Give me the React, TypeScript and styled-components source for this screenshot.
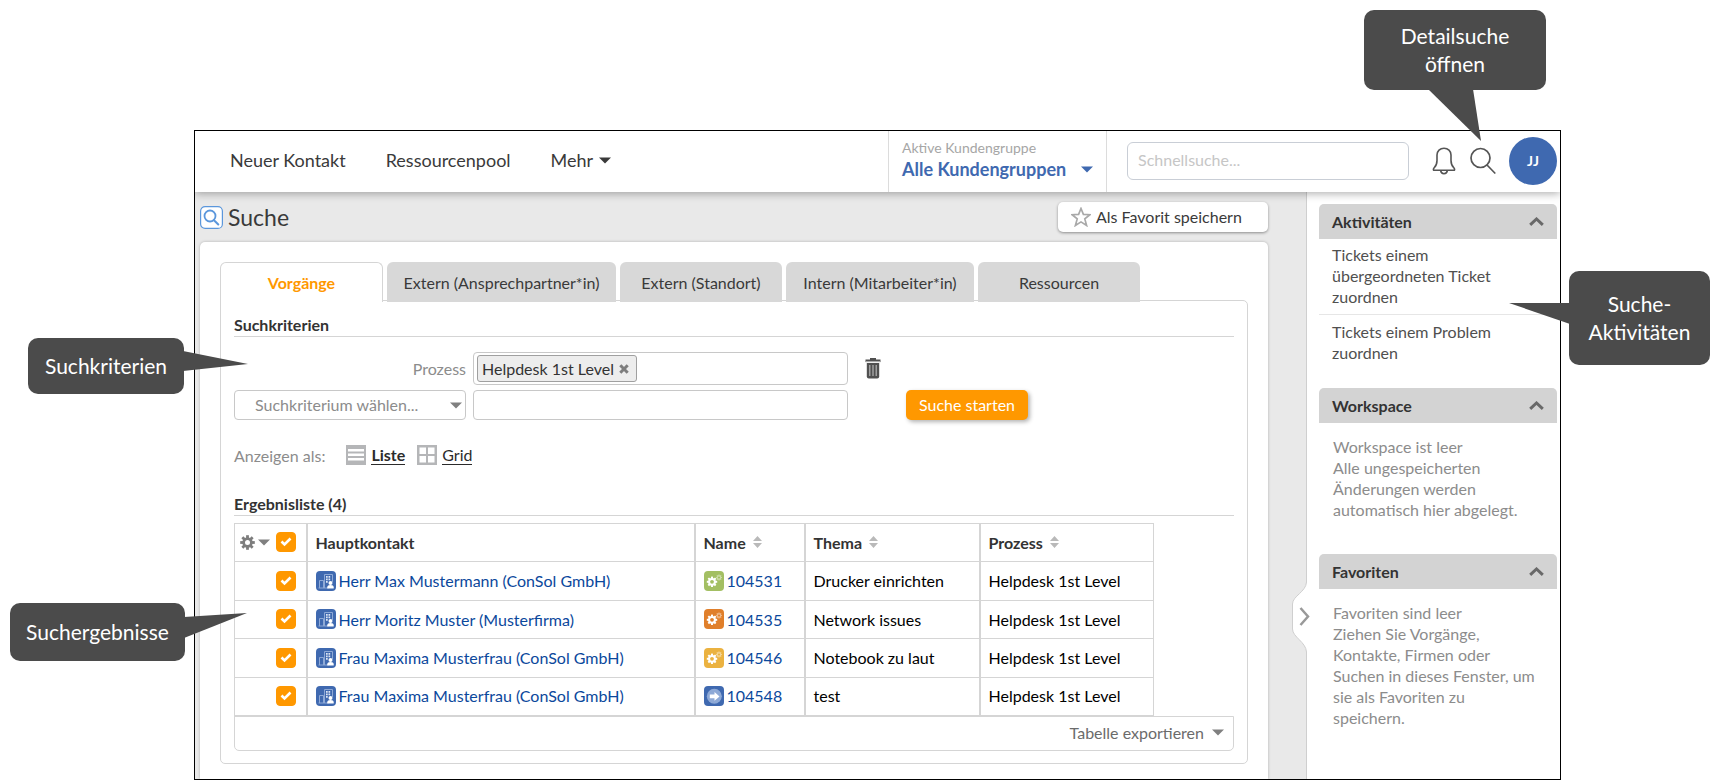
import React, { useState } from 'react';
import styled, { createGlobalStyle, css } from 'styled-components';

const GlobalStyle = createGlobalStyle`
  *, *::before, *::after { box-sizing: border-box; }
  body {
    margin: 0;
    background: #fff;
    color: #3a3a3a;
    font-family: Lato, 'Open Sans', 'Liberation Sans', sans-serif;
    font-size: 16px;
    line-height: 21px;
  }
  button, input, select { font: inherit; color: inherit; }
  button { padding: 0; border: 0; background: none; cursor: pointer; text-align: left; }
  a { color: inherit; text-decoration: none; }
  h1, h2, p, ul { margin: 0; padding: 0; font-size: inherit; font-weight: inherit; }
  ul { list-style: none; }
  svg { display: block; flex: none; }
`;

const Stage = styled.div`
  position: relative;
  padding: 130px 159px 0 194px;
`;

const AppWindow = styled.div`
  overflow: hidden;
  border: 1px solid #000;
  background: #e9e9e9;
`;

/* ---------- header ---------- */

const Header = styled.header`
  position: relative;
  z-index: 1;
  display: flex;
  height: 61px;
  background: #fff;
  box-shadow: 0 2px 8px rgba(0, 0, 0, 0.3);
`;

const Nav = styled.nav`
  flex: 1;
  display: flex;
  align-items: center;
  gap: 40px;
  padding: 0 0 2px 35px;
  font-size: 18px;
  white-space: nowrap;
`;

const MoreButton = styled.button`
  display: flex;
  align-items: center;
  gap: 6px;
`;

const GroupPicker = styled.button`
  display: flex;
  flex-direction: column;
  justify-content: center;
  width: 219px;
  padding: 0 13px 5px;
  border-left: 1px solid #dcdcdc;
  border-right: 1px solid #dcdcdc;
`;

const GroupLabel = styled.span`
  color: #a6a6a6;
  font-size: 14px;
  line-height: 20px;
`;

const GroupValue = styled.span`
  display: flex;
  align-items: center;
  justify-content: space-between;
  width: 100%;
  color: #3f69b0;
  font-size: 18px;
  font-weight: 700;
  line-height: 22px;
  white-space: nowrap;
`;

const HeaderTools = styled.div`
  display: flex;
  align-items: center;
  gap: 13px;
  padding: 0 3px 2px 20px;
`;

const QuickSearch = styled.input`
  width: 282px;
  height: 38px;
  margin-right: 9px;
  padding: 0 10px 2px;
  border: 1px solid #c9ced6;
  border-radius: 6px;
  background: #fff;
  &::placeholder { color: #c6c6c6; opacity: 1; }
`;

const IconButton = styled.button`
  display: grid;
  place-items: center;
  width: 26px;
  height: 32px;
`;

const Avatar = styled.button`
  width: 48px;
  height: 48px;
  border-radius: 50%;
  background: #3f69b0;
  color: #fff;
  font-size: 14px;
  font-weight: 700;
  text-align: center;
`;

/* ---------- page body ---------- */

const Body = styled.div`
  display: flex;
`;

const Main = styled.main`
  flex: 1;
  min-width: 0;
  padding: 10px 38px 0 5px;
`;

const TitleBar = styled.div`
  display: flex;
  align-items: center;
  gap: 5px;
  height: 30px;
  margin-bottom: 10px;
`;

const Title = styled.h1`
  flex: 1;
  font-size: 23px;
  line-height: 30px;
`;

const FavoriteButton = styled.button`
  display: flex;
  align-items: center;
  gap: 5px;
  width: 210px;
  height: 30px;
  padding: 0 0 1px 13px;
  border-radius: 5px;
  background: #fff;
  box-shadow: 0 1px 3px rgba(0, 0, 0, 0.4);
`;

const Card = styled.section`
  padding: 20px 20px 15px;
  border-radius: 5px 5px 0 0;
  background: #fff;
  box-shadow: 0 0 3px rgba(0, 0, 0, 0.25);
`;

const TabList = styled.div`
  position: relative;
  display: flex;
  gap: 4px;
  height: 39px;
  margin-bottom: -1px;
`;

const Tab = styled.button<{ $active: boolean; $basis: number }>`
  width: ${(p) => p.$basis}px;
  height: 40px;
  border-radius: 6px 6px 0 0;
  background: #d8d8d8;
  text-align: center;
  white-space: nowrap;
  ${(p) =>
    p.$active &&
    css`
      border: 1px solid #d5d5d5;
      border-bottom: 0;
      background: #fff;
      color: #ff9800;
      font-weight: 700;
    `}
`;

const Panel = styled.div`
  padding: 12px 13px;
  border: 1px solid #d5d5d5;
  border-radius: 0 5px 5px 5px;
`;

const SectionTitle = styled.h2`
  height: 24px;
  border-bottom: 1px solid #d5d5d5;
  color: #333;
  font-size: 16px;
  font-weight: 700;
  line-height: 23px;
`;

const Criteria = styled.form`
  display: grid;
  grid-template-columns: 232px minmax(0, 375px) 44px auto;
  gap: 5px 7px;
  justify-content: start;
  align-items: center;
  margin: 15px 0 25px;
`;

const CriterionLabel = styled.label`
  justify-self: end;
  color: #8c8c8c;
`;

const TokenBox = styled.div`
  display: flex;
  align-items: center;
  gap: 4px;
  height: 33px;
  padding: 0 3px;
  border: 1px solid #c8c8c8;
  border-radius: 4px;
`;

const Token = styled.span`
  display: flex;
  align-items: center;
  gap: 5px;
  height: 27px;
  padding: 0 7px 0 4px;
  border: 1px solid #a0a0a0;
  border-radius: 3px;
  background: #ededed;
  color: #333;
  white-space: nowrap;
`;

const TokenInput = styled.input`
  flex: 1;
  min-width: 0;
  border: 0;
  outline: 0;
  background: none;
`;

const TextField = styled.input`
  width: 100%;
  height: 30px;
  padding: 0 8px;
  border: 1px solid #c8c8c8;
  border-radius: 4px;
`;

const SelectBox = styled.div`
  display: grid;
  align-items: center;
  > * { grid-area: 1 / 1; }
  > svg { justify-self: end; margin-right: 4px; pointer-events: none; }
`;

const Select = styled.select`
  appearance: none;
  width: 100%;
  height: 30px;
  padding: 0 20px 1px;
  border: 1px solid #c8c8c8;
  border-radius: 4px;
  background: #fff;
  color: #8c8c8c;
`;

const DeleteButton = styled.button`
  padding-left: 10px;
`;

const PrimaryButton = styled.button`
  width: 122px;
  height: 30px;
  padding-bottom: 1px;
  border-radius: 5px;
  background: #ff9800;
  box-shadow: 2px 2px 4px rgba(0, 0, 0, 0.3);
  color: #fff;
  text-align: center;
`;

const ViewSwitch = styled.div`
  display: flex;
  align-items: center;
  gap: 12px;
  height: 20px;
  margin-bottom: 27px;
  color: #8c8c8c;
  > span { margin-right: 9px; }
`;

const ViewLink = styled.a<{ $active?: boolean }>`
  display: flex;
  align-items: center;
  gap: 5px;
  color: #2b2b2b;
  font-weight: ${(p) => (p.$active ? 700 : 400)};
  > span { border-bottom: 1px solid #2b2b2b; line-height: 18px; }
`;

/* ---------- result table ---------- */

const ResultTable = styled.table`
  width: 919px;
  margin-top: 7px;
  border-collapse: collapse;
  table-layout: fixed;
  color: #000;
  white-space: nowrap;
  tr { height: 38px; }
  tbody tr:nth-child(odd) { height: 39px; }
  th, td {
    padding: 0 8px 1px;
    border: 1px solid #d5d5d5;
    border-width: 1px 2px;
    text-align: left;
    vertical-align: middle;
  }
  th { color: #333; }
  th:first-child, td:first-child { padding: 0 10px 1px 6px; border-left-width: 1px; }
  th:last-child, td:last-child { border-right-width: 1px; }
  tbody tr:last-child td { border-bottom-width: 2px; }
`;

const SelectCell = styled.div`
  display: flex;
  align-items: center;
  justify-content: flex-end;
  gap: 6px;
`;

const GearMenu = styled.button`
  display: flex;
  align-items: center;
  gap: 3px;
`;

const CheckBox = styled.label`
  display: grid;
  place-items: center;
  > * { grid-area: 1 / 1; }
  > svg { pointer-events: none; }
`;

const CheckInput = styled.input`
  appearance: none;
  width: 20px;
  height: 20px;
  margin: 0;
  border: 1px solid #ff9800;
  border-radius: 4px;
  background: #fff;
  &:checked { background: #ff9800; }
`;

const SortHead = styled.button`
  display: flex;
  align-items: center;
  gap: 7px;
  font-weight: 700;
`;

const EntityLink = styled.a`
  display: flex;
  align-items: center;
  gap: 3px;
  color: #0b489c;
`;

const TableFooter = styled.div`
  display: flex;
  justify-content: flex-end;
  align-items: center;
  height: 35px;
  margin-top: -1px;
  padding: 0 9px 1px 0;
  border: 1px solid #d5d5d5;
  border-radius: 0 0 5px 5px;
`;

const ExportButton = styled.button`
  display: flex;
  align-items: center;
  gap: 8px;
  color: #6b6b6b;
`;

/* ---------- sidebar ---------- */

const Sidebar = styled.aside`
  position: relative;
  width: 254px;
  padding: 12px 3px 0 12px;
  border-left: 1px solid #cfcfcf;
  background: #fff;
`;

const CollapseHandle = styled.button`
  position: absolute;
  top: 390px;
  left: -16px;
`;

const SideSection = styled.section<{ $gap: number }>`
  padding-bottom: ${(p) => p.$gap}px;
`;

const SideHeader = styled.button`
  display: flex;
  align-items: center;
  justify-content: space-between;
  width: 100%;
  height: 35px;
  padding: 0 13px 1px;
  border-radius: 5px 5px 0 0;
  background: #d3d3d3;
  color: #333;
  font-size: 16px;
  font-weight: 700;
`;

const ActivityList = styled.ul`
  li { padding: 5px 13px 7px; color: #50504f; }
  li + li { padding: 6px 13px; border-top: 1px solid #e6e6e6; }
  li a { display: block; max-width: 180px; }
`;

const EmptyText = styled.p`
  padding: 13px 14px 0;
  color: #8c8c8c;
`;

/* ---------- callouts ---------- */

const Callout = styled.div<{ $w: number; $h: number }>`
  position: absolute;
  z-index: 2;
  display: grid;
  place-items: center;
  width: ${(p) => p.$w}px;
  height: ${(p) => p.$h}px;
  padding-bottom: 1px;
  border-radius: 10px;
  background: #4b4b4b;
  color: #fff;
  font-size: 21px;
  line-height: 28px;
  text-align: center;
  svg { position: absolute; fill: #4b4b4b; pointer-events: none; }
`;

const DetailCallout = styled(Callout)`
  top: 10px;
  right: 174px;
  svg { top: 79px; left: 64px; }
`;

const ActivityCallout = styled(Callout)`
  top: 271px;
  right: 10px;
  svg { top: 32px; left: -60px; }
`;

const CriteriaCallout = styled(Callout)`
  top: 338px;
  left: 28px;
  svg { top: 13px; left: 155px; }
`;

const ResultCallout = styled(Callout)`
  top: 603px;
  left: 10px;
  svg { top: 9px; left: 174px; }
`;

/* ---------- icons ---------- */

const Caret = ({ color = '#808080' }: { color?: string }) => (
  <svg width="12" height="7" viewBox="0 0 12 7" aria-hidden="true">
    <path d="M0 0.5h12l-6 6z" fill={color} />
  </svg>
);

const BellIcon = () => (
  <svg width="24" height="28" viewBox="0 0 24 28" fill="none" stroke="#555" strokeWidth="1.6" strokeLinejoin="round" aria-hidden="true">
    <path d="M12 1.2C8 1.2 5 4 5 8v5.500C5 17.500 4 19 2.200 20.800c-.8.8-1 2-.6 2.400h20.800c.4-.4.2-1.600-.6-2.400C20 19 19 17.500 19 13.500V8c0-4-3-6.800-7-6.800z" />
    <path d="M8.600 23.400c.3 2.200 1.600 3.400 3.400 3.400s3.100-1.200 3.400-3.400" />
  </svg>
);

const SearchIcon = () => (
  <svg width="26" height="28" viewBox="0 0 26 28" fill="none" stroke="#555" strokeWidth="1.700" strokeLinecap="round" aria-hidden="true">
    <circle cx="10.500" cy="11" r="9.500" />
    <path d="M17.500 18.500l7.300 7.500" />
  </svg>
);

const PageIcon = () => (
  <svg width="23" height="23" viewBox="0 0 23 23" fill="none" stroke="#5b97dc" aria-hidden="true">
    <rect x="0.600" y="0.600" width="21.800" height="21.800" rx="4.500" fill="#fff" strokeWidth="1.200" />
    <circle cx="10" cy="10" r="5.500" strokeWidth="1.800" />
    <path d="M14 14.200l4.300 4.300" strokeWidth="2" strokeLinecap="round" />
  </svg>
);

const StarIcon = () => (
  <svg width="20" height="20" viewBox="0 0 20 20" fill="none" stroke="#a9a9a9" strokeWidth="1.700" aria-hidden="true">
    <path d="M10 1.500l2.400 5.900 6.500.3-5.100 4.200 1.800 6.600L10 14.900l-5.600 3.600 1.800-6.600L1.100 7.700l6.500-.3z" />
  </svg>
);

const TrashIcon = () => (
  <svg width="16" height="21" viewBox="0 0 16 21" aria-hidden="true">
    <path d="M5 0h6v1.500h4.500V4H.5V1.500H5z" fill="#505050" />
    <path d="M.5 3h15v1.200H.5z" fill="#a8a8a8" />
    <path d="M1.800 5h12.400v13.500a2 2 0 0 1-2 2H3.800a2 2 0 0 1-2-2z" fill="#505050" />
    <path d="M4.800 7v11M8 7v11M11.200 7v11" stroke="#b5b5b5" strokeWidth="1.200" />
  </svg>
);

const CloseIcon = () => (
  <svg width="10" height="10" viewBox="0 0 10 10" stroke="#7d7d7d" strokeWidth="3" aria-hidden="true">
    <path d="M1.300 1.300l7.400 7.400M8.700 1.300L1.300 8.700" />
  </svg>
);

const ListIcon = () => (
  <svg width="20" height="20" viewBox="0 0 20 20" aria-hidden="true">
    <rect width="20" height="20" fill="#b5b6b8" />
    <path d="M2 4h16v2.500H2zM2 8.500h16V11H2zM2 13h16v2.500H2z" fill="#fff" />
  </svg>
);

const GridIcon = () => (
  <svg width="20" height="20" viewBox="0 0 20 20" aria-hidden="true">
    <rect width="20" height="20" fill="#b5b6b8" />
    <path d="M2.500 2.500H9V9H2.500zM11 2.500h6.500V9H11zM2.500 11H9v6.500H2.500zM11 11h6.500v6.500H11z" fill="#fff" />
  </svg>
);

const teeth = (cx: number, cy: number, r: number, w: number) =>
  [0, 45, 90, 135].map((a) => (
    <rect key={a} x={cx - r} y={cy - w / 2} width={2 * r} height={w} transform={`rotate(${a} ${cx} ${cy})`} />
  ));

const GearIcon = () => (
  <svg width="15" height="15" viewBox="0 0 15 15" fill="#7d7d7d" aria-hidden="true">
    {teeth(7.5, 7.5, 7.3, 2.8)}
    <circle cx="7.500" cy="7.500" r="5.200" />
    <circle cx="7.500" cy="7.500" r="2.500" fill="#fff" />
  </svg>
);

const CheckMark = () => (
  <svg width="12" height="10" viewBox="0 0 12 10" fill="none" stroke="#fff" strokeWidth="2.600" aria-hidden="true">
    <path d="M1.500 4.500l3 3L10.500 1.500" />
  </svg>
);

const SortIcon = () => (
  <svg width="9" height="12" viewBox="0 0 9 12" fill="#b9b9b9" aria-hidden="true">
    <path d="M4.500 0L9 5H0zM0 7h9l-4.500 5z" />
  </svg>
);

const ContactIcon = () => (
  <svg width="20" height="20" viewBox="0 0 20 20" fill="none" aria-hidden="true">
    <rect width="20" height="20" rx="4" fill="#3f69b0" />
    <path d="M3.500 17V9.500h4V17M8.500 17V3.500h8V11" stroke="#8ea9d6" strokeWidth="1" />
    <path d="M2.500 17h10" stroke="#8ea9d6" />
    <path d="M10 5h1.700v1.700H10zM12.500 5h1.700v1.700h-1.700zM10 7.500h1.700v1.700H10zM12.500 7.500h1.700v1.700h-1.700zM10 10h1.700v1.700H10z" fill="#dfe7f5" />
    <circle cx="14.500" cy="12" r="2" fill="#fff" />
    <path d="M11.300 17.500v-1.300c0-1.400 1.200-2.200 3.200-2.200s3.200.8 3.200 2.200v1.300z" fill="#fff" />
  </svg>
);

const GearsTile = ({ color }: { color: string }) => (
  <svg width="20" height="20" viewBox="0 0 20 20" aria-hidden="true">
    <rect width="20" height="20" rx="4" fill={color} />
    <g fill="#fff">
      {teeth(8, 10.8, 5.2, 2)}
      <circle cx="8" cy="10.800" r="3.900" />
      <circle cx="8" cy="10.800" r="1.900" fill={color} />
    </g>
    <g fill="#fff" opacity="0.45">
      {teeth(15, 6.5, 3, 1.2)}
      <circle cx="15" cy="6.500" r="2.200" />
    </g>
    <circle cx="15" cy="6.500" r="1.100" fill={color} />
  </svg>
);

const ArrowTile = () => (
  <svg width="20" height="20" viewBox="0 0 20 20" aria-hidden="true">
    <rect width="20" height="20" rx="4" fill="#3f69b0" />
    <circle cx="10.300" cy="10.300" r="7.500" fill="#8ea9d6" />
    <path d="M5.800 8.500h4.700V6l5 4.400-5 4.400v-2.500H5.800z" fill="#fff" />
  </svg>
);

const ChevronUp = () => (
  <svg width="15" height="9" viewBox="0 0 15 9" fill="none" stroke="#696969" strokeWidth="3" aria-hidden="true">
    <path d="M1.200 7.800L7.500 2l6.300 5.800" />
  </svg>
);

const HandleIcon = () => (
  <svg width="20" height="70" viewBox="0 0 20 70" fill="none" aria-hidden="true">
    <path d="M20 0h-4.500C15 10 1.500 14 1.500 22v25C1.500 55 15 60 15.500 70H20z" fill="#fff" />
    <path d="M15.500 0C15 10 1.500 14 1.500 22v25C1.500 55 15 60 15.500 70" stroke="#cfcfcf" />
    <path d="M9.500 26l7.500 8.500L9.500 43" stroke="#999" strokeWidth="2.500" />
  </svg>
);

/* ---------- data ---------- */

const tabs = [
  { label: 'Vorgänge', basis: 163 },
  { label: 'Extern (Ansprechpartner*in)', basis: 229 },
  { label: 'Extern (Standort)', basis: 162 },
  { label: 'Intern (Mitarbeiter*in)', basis: 188 },
  { label: 'Ressourcen', basis: 162 },
];

const tickets = [
  { contact: 'Herr Max Mustermann (ConSol GmbH)', id: '104531', topic: 'Drucker einrichten', color: '#a3bf63' },
  { contact: 'Herr Moritz Muster (Musterfirma)', id: '104535', topic: 'Network issues', color: '#e07f2b' },
  { contact: 'Frau Maxima Musterfrau (ConSol GmbH)', id: '104546', topic: 'Notebook zu laut', color: '#ebb240' },
  { contact: 'Frau Maxima Musterfrau (ConSol GmbH)', id: '104548', topic: 'test', color: null },
];

const columnWidths = [72, 388, 110, 175, 174];

const Check = ({ label }: { label: string }) => (
  <CheckBox>
    <CheckInput type="checkbox" defaultChecked aria-label={label} />
    <CheckMark />
  </CheckBox>
);

export default function App() {
  const [active, setActive] = useState(0);

  return (
    <>
      <GlobalStyle />
      <Stage>
        <AppWindow>
          <Header>
            <Nav>
              <a href="#kontakt">Neuer Kontakt</a>
              <a href="#ressourcen">Ressourcenpool</a>
              <MoreButton type="button">Mehr <Caret color="#3a3a3a" /></MoreButton>
            </Nav>
            <GroupPicker type="button">
              <GroupLabel>Aktive Kundengruppe</GroupLabel>
              <GroupValue>Alle Kundengruppen <Caret color="#3f69b0" /></GroupValue>
            </GroupPicker>
            <HeaderTools>
              <QuickSearch type="text" aria-label="Schnellsuche" placeholder="Schnellsuche..." />
              <IconButton type="button" aria-label="Benachrichtigungen"><BellIcon /></IconButton>
              <IconButton type="button" aria-label="Detailsuche"><SearchIcon /></IconButton>
              <Avatar type="button">JJ</Avatar>
            </HeaderTools>
          </Header>

          <Body>
            <Main>
              <TitleBar>
                <PageIcon />
                <Title>Suche</Title>
                <FavoriteButton type="button"><StarIcon />Als Favorit speichern</FavoriteButton>
              </TitleBar>
              <Card>
                <TabList role="tablist">
                  {tabs.map((t, i) => (
                    <Tab key={t.label} type="button" role="tab" aria-selected={i === active} $active={i === active} $basis={t.basis} onClick={() => setActive(i)}>
                      {t.label}
                    </Tab>
                  ))}
                </TabList>
                <Panel>
                  <SectionTitle>Suchkriterien</SectionTitle>
                  <Criteria onSubmit={(e) => e.preventDefault()}>
                    <CriterionLabel htmlFor="process">Prozess</CriterionLabel>
                    <TokenBox>
                      <Token>
                        Helpdesk 1st Level
                        <button type="button" aria-label="Entfernen"><CloseIcon /></button>
                      </Token>
                      <TokenInput id="process" type="text" />
                    </TokenBox>
                    <DeleteButton type="button" aria-label="Kriterium löschen"><TrashIcon /></DeleteButton>
                    <span />
                    <SelectBox>
                      <Select aria-label="Suchkriterium">
                        <option>Suchkriterium wählen...</option>
                      </Select>
                      <Caret />
                    </SelectBox>
                    <TextField type="text" aria-label="Suchwert" />
                    <span />
                    <PrimaryButton type="submit">Suche starten</PrimaryButton>
                  </Criteria>
                  <ViewSwitch>
                    <span>Anzeigen als:</span>
                    <ViewLink href="#liste" $active><ListIcon /><span>Liste</span></ViewLink>
                    <ViewLink href="#grid"><GridIcon /><span>Grid</span></ViewLink>
                  </ViewSwitch>
                  <SectionTitle>Ergebnisliste (4)</SectionTitle>
                  <ResultTable>
                    <colgroup>
                      {columnWidths.map((w, i) => (
                        <col key={i} width={w} />
                      ))}
                    </colgroup>
                    <thead>
                      <tr>
                        <th>
                          <SelectCell>
                            <GearMenu type="button" aria-label="Tabelle anpassen"><GearIcon /><Caret /></GearMenu>
                            <Check label="Alle auswählen" />
                          </SelectCell>
                        </th>
                        <th>Hauptkontakt</th>
                        <th><SortHead type="button">Name <SortIcon /></SortHead></th>
                        <th><SortHead type="button">Thema <SortIcon /></SortHead></th>
                        <th><SortHead type="button">Prozess <SortIcon /></SortHead></th>
                      </tr>
                    </thead>
                    <tbody>
                      {tickets.map((t) => (
                        <tr key={t.id}>
                          <td><SelectCell><Check label={t.id} /></SelectCell></td>
                          <td><EntityLink href="#kontakt"><ContactIcon />{t.contact}</EntityLink></td>
                          <td>
                            <EntityLink href={`#${t.id}`}>
                              {t.color ? <GearsTile color={t.color} /> : <ArrowTile />}
                              {t.id}
                            </EntityLink>
                          </td>
                          <td>{t.topic}</td>
                          <td>Helpdesk 1st Level</td>
                        </tr>
                      ))}
                    </tbody>
                  </ResultTable>
                  <TableFooter>
                    <ExportButton type="button">Tabelle exportieren <Caret /></ExportButton>
                  </TableFooter>
                </Panel>
              </Card>
            </Main>

            <Sidebar>
              <SideSection $gap={19}>
                <SideHeader type="button">Aktivitäten <ChevronUp /></SideHeader>
                <ActivityList>
                  <li><a href="#uebergeordnet">Tickets einem übergeordneten Ticket zuordnen</a></li>
                  <li><a href="#problem">Tickets einem Problem zuordnen</a></li>
                </ActivityList>
              </SideSection>
              <SideSection $gap={34}>
                <SideHeader type="button">Workspace <ChevronUp /></SideHeader>
                <EmptyText>
                  Workspace ist leer<br />Alle ungespeicherten<br />Änderungen werden<br />automatisch hier abgelegt.
                </EmptyText>
              </SideSection>
              <SideSection $gap={0}>
                <SideHeader type="button">Favoriten <ChevronUp /></SideHeader>
                <EmptyText>
                  Favoriten sind leer<br />Ziehen Sie Vorgänge,<br />Kontakte, Firmen oder<br />Suchen in dieses Fenster, um<br />sie als Favoriten zu<br />speichern.
                </EmptyText>
              </SideSection>
              <CollapseHandle type="button" aria-label="Seitenleiste einklappen"><HandleIcon /></CollapseHandle>
            </Sidebar>
          </Body>
        </AppWindow>

        <DetailCallout $w={182} $h={80}>
          Detailsuche<br />öffnen
          <svg width="54" height="53" viewBox="0 0 54 53"><path d="M0 0h45l8 52z" /></svg>
        </DetailCallout>
        <ActivityCallout $w={141} $h={94}>
          Suche-<br />Aktivitäten
          <svg width="61" height="21" viewBox="0 0 61 21"><path d="M0 0h61v21z" /></svg>
        </ActivityCallout>
        <CriteriaCallout $w={156} $h={56}>
          Suchkriterien
          <svg width="66" height="20" viewBox="0 0 66 20"><path d="M0 0l65 13L0 20z" /></svg>
        </CriteriaCallout>
        <ResultCallout $w={175} $h={58}>
          Suchergebnisse
          <svg width="64" height="26" viewBox="0 0 64 26"><path d="M0 5L63 1 0 26z" /></svg>
        </ResultCallout>
      </Stage>
    </>
  );
}
